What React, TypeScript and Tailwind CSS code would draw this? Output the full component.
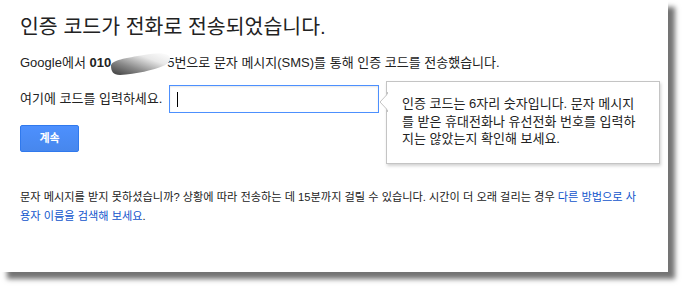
const font = "font-['Liberation_Sans','Noto_Sans_CJK_KR',sans-serif]";

function Smudge() {
  return (
    <span className="relative inline-block w-[56px] h-[12px] align-middle">
      <svg className="absolute -left-[3px] -top-[7px]" width="66" height="26" viewBox="0 0 66 26">
        <defs>
          <linearGradient id="smudge" x1="0" y1="1" x2="1" y2="0">
            <stop offset="0" stopColor="#3a3a3a" />
            <stop offset="0.35" stopColor="#8a8a8a" />
            <stop offset="0.7" stopColor="#e8e8e8" />
            <stop offset="1" stopColor="#ffffff" />
          </linearGradient>
        </defs>
        <path
          d="M3 15 C3 9 18 7 36 4 C48 2 57 1 61 5 C64 9 60 13 55 15 C46 19 28 23 12 24 C5 24 3 20 3 15 Z"
          fill="url(#smudge)"
        />
      </svg>
    </span>
  );
}

function Tooltip() {
  const lines = [
    '인증 코드는 6자리 숫자입니다. 문자 메시지',
    '를 받은 휴대전화나 유선전화 번호를 입력하',
    '지는 않았는지 확인해 보세요.',
  ];
  return (
    <div className="absolute left-[386px] top-[81px] w-[274px] h-[83px] bg-white border border-[#c4c4c4] shadow-[1px_2px_3px_rgba(0,0,0,0.18)] pl-[15px] pt-[13px]">
      <svg className="absolute -left-[8px] top-[10px]" width="9" height="20" viewBox="0 0 9 20">
        <path d="M8.5 0 L8.5 2 L1 10 L8.5 18 L8.5 20" fill="#fff" stroke="#c4c4c4" strokeWidth="1" />
        <rect x="8" y="2.5" width="1" height="15" fill="#fff" />
      </svg>
      <div className="text-[13px] leading-[17.5px] text-[#222]">
        {lines.map((l) => (
          <div key={l} className="whitespace-nowrap">{l}</div>
        ))}
      </div>
    </div>
  );
}

export default function App() {
  return (
    <div className={`w-[683px] h-[287px] bg-white overflow-hidden ${font}`}>
      <div className="relative w-[668px] h-[272px] bg-white shadow-[7px_7px_5px_rgba(0,0,0,0.55)] pl-5 pt-[15px] text-[#222]">
        <h1 className="text-[20.5px] leading-[24px] font-normal">인증 코드가 전화로 전송되었습니다.</h1>
        <p className="mt-[15px] text-[13px] leading-[18px] whitespace-nowrap">
          Google에서 <b>010</b>
          <Smudge />
          5번으로 문자 메시지(SMS)를 통해 인증 코드를 전송했습니다.
        </p>
        <div className="mt-[13px] flex items-center gap-[7px]">
          <span className="text-[13px]">여기에 코드를 입력하세요.</span>
          <div className="w-[210px] h-[28px] border border-[#4d90fe] shadow-[inset_0_1px_2px_rgba(0,0,0,0.1)] flex items-center pl-[7px]">
            <span className="w-px h-[15px] bg-black" />
          </div>
        </div>
        <button className="mt-[12px] w-[59px] h-[27px] rounded-[2px] border border-[#3079ed] bg-gradient-to-b from-[#4d90fe] to-[#4787ed] text-white text-[11px] font-bold">
          계속
        </button>
        <div className="mt-[36px] text-[11.2px] leading-[19px]">
          <div className="whitespace-nowrap">
            문자 메시지를 받지 못하셨습니까? 상황에 따라 전송하는 데 15분까지 걸릴 수 있습니다. 시간이 더 오래 걸리는 경우{' '}
            <a className="text-[#1155cc]">다른 방법으로 사</a>
          </div>
          <div className="whitespace-nowrap">
            <a className="text-[#1155cc]">용자 이름을 검색해 보세요</a>.
          </div>
        </div>
        <Tooltip />
      </div>
    </div>
  );
}
